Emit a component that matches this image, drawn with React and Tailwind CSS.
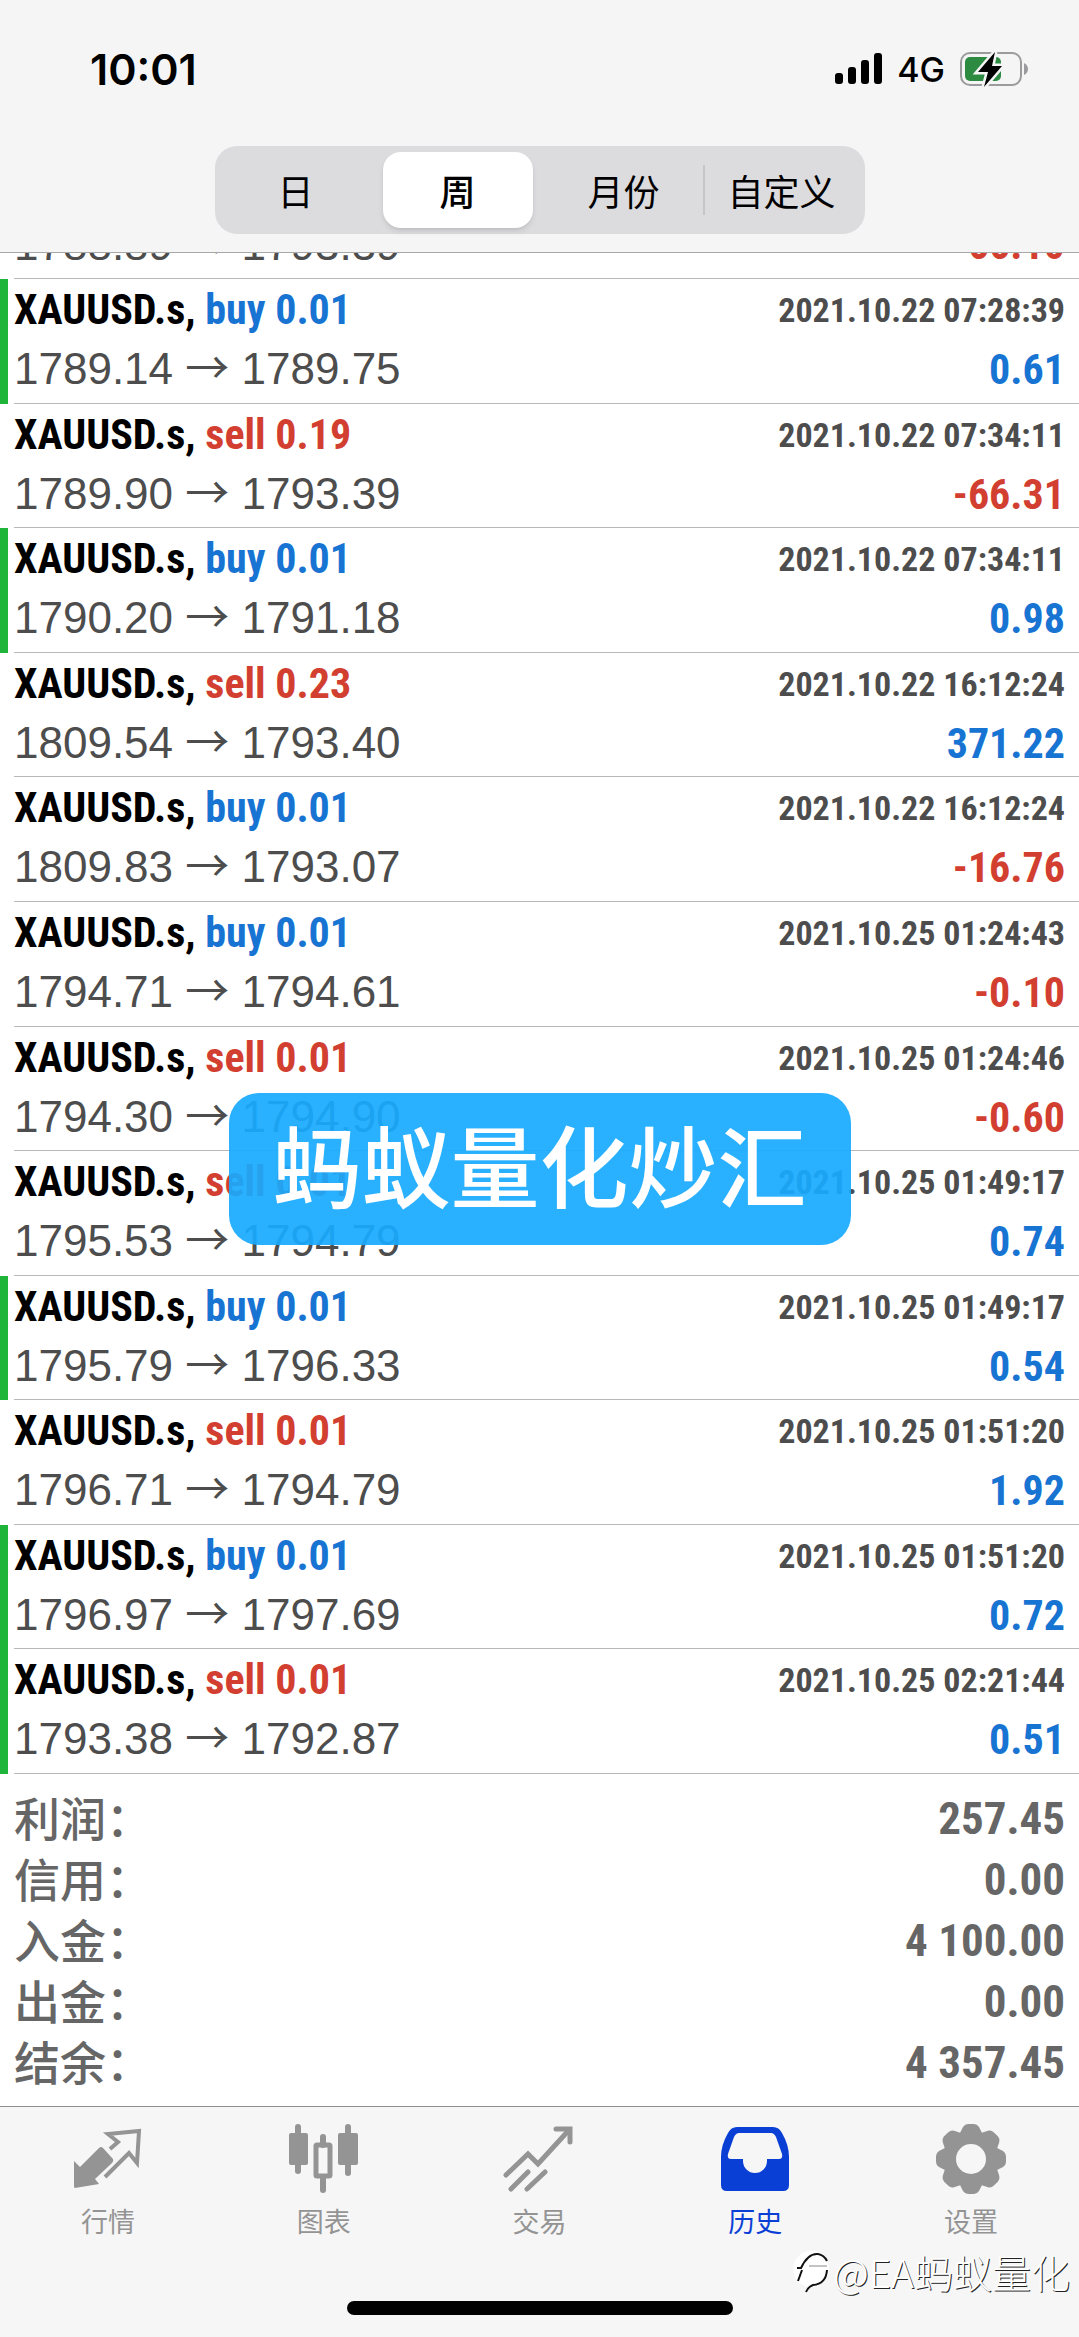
import React from 'react';

const trades = [
  { side: 'buy', lots: '0.01', open: '1789.14', close: '1789.75', time: '2021.10.22 07:28:39', profit: '0.61', tp: true },
  { side: 'sell', lots: '0.19', open: '1789.90', close: '1793.39', time: '2021.10.22 07:34:11', profit: '-66.31' },
  { side: 'buy', lots: '0.01', open: '1790.20', close: '1791.18', time: '2021.10.22 07:34:11', profit: '0.98', tp: true },
  { side: 'sell', lots: '0.23', open: '1809.54', close: '1793.40', time: '2021.10.22 16:12:24', profit: '371.22' },
  { side: 'buy', lots: '0.01', open: '1809.83', close: '1793.07', time: '2021.10.22 16:12:24', profit: '-16.76' },
  { side: 'buy', lots: '0.01', open: '1794.71', close: '1794.61', time: '2021.10.25 01:24:43', profit: '-0.10' },
  { side: 'sell', lots: '0.01', open: '1794.30', close: '1794.90', time: '2021.10.25 01:24:46', profit: '-0.60' },
  { side: 'sell', lots: '0.01', open: '1795.53', close: '1794.79', time: '2021.10.25 01:49:17', profit: '0.74' },
  { side: 'buy', lots: '0.01', open: '1795.79', close: '1796.33', time: '2021.10.25 01:49:17', profit: '0.54', tp: true },
  { side: 'sell', lots: '0.01', open: '1796.71', close: '1794.79', time: '2021.10.25 01:51:20', profit: '1.92' },
  { side: 'buy', lots: '0.01', open: '1796.97', close: '1797.69', time: '2021.10.25 01:51:20', profit: '0.72', tp: true },
  { side: 'sell', lots: '0.01', open: '1793.38', close: '1792.87', time: '2021.10.25 02:21:44', profit: '0.51', tp: true },
];

const totals = [
  { label: '利润：', value: '257.45' },
  { label: '信用：', value: '0.00' },
  { label: '入金：', value: '4 100.00' },
  { label: '出金：', value: '0.00' },
  { label: '结余：', value: '4 357.45' },
];

const QuotesIcon = () => (
  <svg width="72" height="72" viewBox="0 0 72 72" fill="none">
    <path d="M2 38 L8 44 L27 25 Q29 23 31 25 L41 36 Q42 38 40 40 L23 56 L27 61 L3 65 Q2 65 2 63 Z" fill="currentColor" />
    <path d="M38 26 L46 19 L36 11 L67 8 L65 40 L57 30 L33 54" stroke="currentColor" strokeWidth="4" />
  </svg>
);

const ChartsIcon = () => (
  <svg width="72" height="72" viewBox="0 0 72 72" fill="none">
    <g fill="currentColor">
      <rect x="7" y="1" width="6" height="50" rx="3" />
      <rect x="1" y="10" width="19" height="32" rx="2" />
      <rect x="57" y="1" width="6" height="52" rx="3" />
      <rect x="50" y="10" width="20" height="32" rx="2" />
      <rect x="32" y="11" width="6" height="14" rx="3" />
      <rect x="32" y="52" width="6" height="18" rx="3" />
    </g>
    <rect x="28" y="22" width="14" height="31" rx="1" stroke="currentColor" strokeWidth="5" />
  </svg>
);

const TradeIcon = () => (
  <svg width="72" height="72" viewBox="0 0 72 72" fill="none" stroke="currentColor" strokeWidth="5" strokeLinecap="round">
    <path d="M3 52 L25 31 L35 41 L66 7" />
    <path d="M53 6 H67 V19" />
    <path d="M8 66 L25 49 M24 66 L42 49" />
  </svg>
);

const HistoryIcon = () => (
  <svg width="72" height="72" viewBox="0 0 72 72">
    <path
      fillRule="evenodd"
      fill="currentColor"
      d="M18 4 H54 Q60 4 63 10 Q70 22 70 34 V62 Q70 68 64 68 H8 Q2 68 2 62 V34 Q2 22 9 10 Q12 4 18 4 Z M20 10 Q17 10 15 14 L9 31 Q8 36 12 36 H24 V38 A12 12 0 0 0 48 38 V36 H60 Q64 36 63 31 L57 14 Q55 10 52 10 Z"
    />
  </svg>
);

const SettingsIcon = () => (
  <svg width="72" height="72" viewBox="-36 -36 72 72">
    <mask id="gearHole">
      <rect x="-36" y="-36" width="72" height="72" fill="white" />
      <circle r="15" fill="black" />
    </mask>
    <g fill="currentColor" mask="url(#gearHole)">
      <circle r="28" />
      {[0, 45, 90, 135, 180, 225, 270, 315].map((angle) => (
        <path key={angle} transform={`rotate(${angle})`} d="M-12 -24 L-8 -32 Q-6 -35 -3 -35 H3 Q6 -35 8 -32 L12 -24 Z" />
      ))}
    </g>
  </svg>
);

const tabs = [
  { name: '行情', Icon: QuotesIcon },
  { name: '图表', Icon: ChartsIcon },
  { name: '交易', Icon: TradeIcon },
  { name: '历史', Icon: HistoryIcon, active: true },
  { name: '设置', Icon: SettingsIcon },
];

const StatusBar = () => (
  <div className="flex h-[138px] items-center justify-between pr-[50px] pl-[90px]">
    <span className="font-['Inter',sans-serif] text-[43px] font-semibold">10:01</span>
    <div className="flex items-center">
      <svg width="48" height="32" viewBox="0 0 48 32">
        <rect x="0" y="20" width="8" height="11" rx="3" />
        <rect x="13" y="14" width="8" height="17" rx="3" />
        <rect x="26" y="7" width="8" height="24" rx="3" />
        <rect x="39" y="0" width="8" height="31" rx="3" />
      </svg>
      <span className="ml-[14px] font-['Inter',sans-serif] text-[34px] font-medium">4G</span>
      <svg className="ml-[14px]" width="70" height="38" viewBox="0 0 70 38" fill="none">
        <rect x="2" y="3" width="60" height="32" rx="9" stroke="#9b9b9d" strokeWidth="2" />
        <path d="M65 13 Q69 15 69 19 Q69 23 65 25 Z" fill="#9b9b9d" />
        <rect x="6" y="7" width="36" height="24" rx="5" fill="#2c8a41" />
        <path d="M36 2 L19 22 H29 L25 37 L43 16 H33 Z" fill="#000" stroke="#f5f5f6" strokeWidth="5" />
        <path d="M36 2 L19 22 H29 L25 37 L43 16 H33 Z" fill="#000" />
      </svg>
    </div>
  </div>
);

const RangeSwitch = () => (
  <div className="mx-auto flex h-[88px] w-[650px] items-center rounded-[22px] bg-[#dcdbde] p-[6px] text-[36px]">
    <button className="mr-[12px] h-full w-[150px]">日</button>
    <button className="mr-[12px] h-full w-[150px] rounded-[18px] bg-white font-medium shadow-md">周</button>
    <button className="h-full flex-1">月份</button>
    <span className="h-[50px] w-[2px] bg-[#c6c5c8]" />
    <button className="h-full w-[154px]">自定义</button>
  </div>
);

const Prices = ({ open, close }) => (
  <span className="font-['Liberation_Sans',sans-serif] text-[44px] leading-[62px] text-[#4d4d4d]">
    {open} <span className="font-['Noto_Sans_CJK_SC',sans-serif] leading-none">→</span> {close}
  </span>
);

const Profit = ({ value }) => (
  <span
    className={`font-['Roboto_Condensed',sans-serif] text-[42px] leading-[62px] font-bold ${
      value.startsWith('-') ? 'text-[#d23f31]' : 'text-[#1874d2]'
    }`}
  >
    {value}
  </span>
);

const TradeRow = ({ trade }) => (
  <li className={`flex border-l-8 pl-[6px] ${trade.tp ? 'border-[#1eb53a]' : 'border-transparent'}`}>
    <div className="flex-1 border-b border-[#b8b8b8] pt-[3px] pr-[14px]">
      <div className="flex items-center justify-between font-['Roboto_Condensed',sans-serif] leading-[56px] font-bold">
        <span className="text-[42px]">
          XAUUSD.s,{' '}
          <span className={trade.side === 'buy' ? 'text-[#1874d2]' : 'text-[#d23f31]'}>
            {trade.side} {trade.lots}
          </span>
        </span>
        <span className="text-[34px] text-[#4d4d4d]">{trade.time}</span>
      </div>
      <div className="flex items-baseline justify-between">
        <Prices open={trade.open} close={trade.close} />
        <Profit value={trade.profit} />
      </div>
    </div>
  </li>
);

const App = () => {
  return (
    <div className="relative flex min-h-screen flex-col bg-white font-['Noto_Sans_CJK_SC',sans-serif] text-black">
      {/* Header */}
      <header className="h-[253px] border-b border-[#a8a8a8] bg-[#f5f5f6]">
        <StatusBar />
        <div className="pt-[8px]">
          <RangeSwitch />
        </div>
      </header>

      {/* Row scrolled under the header */}
      <div className="ml-[14px] flex h-[26px] items-end justify-between overflow-hidden border-b border-[#b8b8b8] pr-[14px] pb-[2px]">
        <Prices open="1788.89" close="1793.39" />
        <Profit value="-66.10" />
      </div>

      {/* Trades */}
      <ul className="grid flex-1 auto-rows-fr">
        {trades.map((trade, index) => (
          <TradeRow key={index} trade={trade} />
        ))}
      </ul>

      {/* Totals */}
      <dl className="px-[14px] pt-[14px] pb-[13px] text-[#666666]">
        {totals.map((item) => (
          <div key={item.label} className="flex h-[61px] justify-between">
            <dt className="text-[46px] leading-[56px] font-medium">{item.label}</dt>
            <dd className="font-['Roboto_Condensed',sans-serif] text-[45px] leading-[62px] font-bold">{item.value}</dd>
          </div>
        ))}
      </dl>

      {/* Tab bar */}
      <footer className="h-[231px] border-t border-[#8e8e8e] bg-[#f6f6f6] pt-[16px]">
        <nav className="grid grid-cols-5">
          {tabs.map(({ name, Icon, active }) => (
            <button key={name} className={`flex flex-col items-center ${active ? 'text-[#0a3fd6]' : 'text-[#949494]'}`}>
              <Icon />
              <span className="mt-[6px] text-[27px] leading-[40px]">{name}</span>
            </button>
          ))}
        </nav>
        <div className="mx-auto mt-[60px] h-[14px] w-[386px] rounded-full bg-black" />
      </footer>

      {/* Banner */}
      <div className="absolute top-[1093px] left-1/2 flex h-[152px] w-[622px] -translate-x-1/2 items-center justify-center rounded-[30px] bg-[#17a9fe]/92 pb-[12px] text-[89px] font-medium text-white">
        蚂蚁量化炒汇
      </div>

      {/* Watermark */}
      <div className="absolute right-[9px] bottom-[38px] flex items-center text-[39px] leading-[56px] font-light text-white [text-shadow:1px_1px_0px_#222]">
        <svg width="42" height="46" viewBox="0 0 42 46" fill="none">
          <circle cx="20" cy="21" r="18" fill="#fff" />
          <path d="M6 20 H10 Q17 5 27 6 Q33 7 36 13" stroke="#111" strokeWidth="2" />
          <path d="M18 18 H36" stroke="#888" strokeWidth="1" />
          <path d="M11 22 L7 33" stroke="#111" strokeWidth="2" />
          <path d="M36 22 Q35 36 22 37 Q17 39 15 44" stroke="#111" strokeWidth="2" />
        </svg>
        @EA蚂蚁量化
      </div>
    </div>
  );
};

export default App;
